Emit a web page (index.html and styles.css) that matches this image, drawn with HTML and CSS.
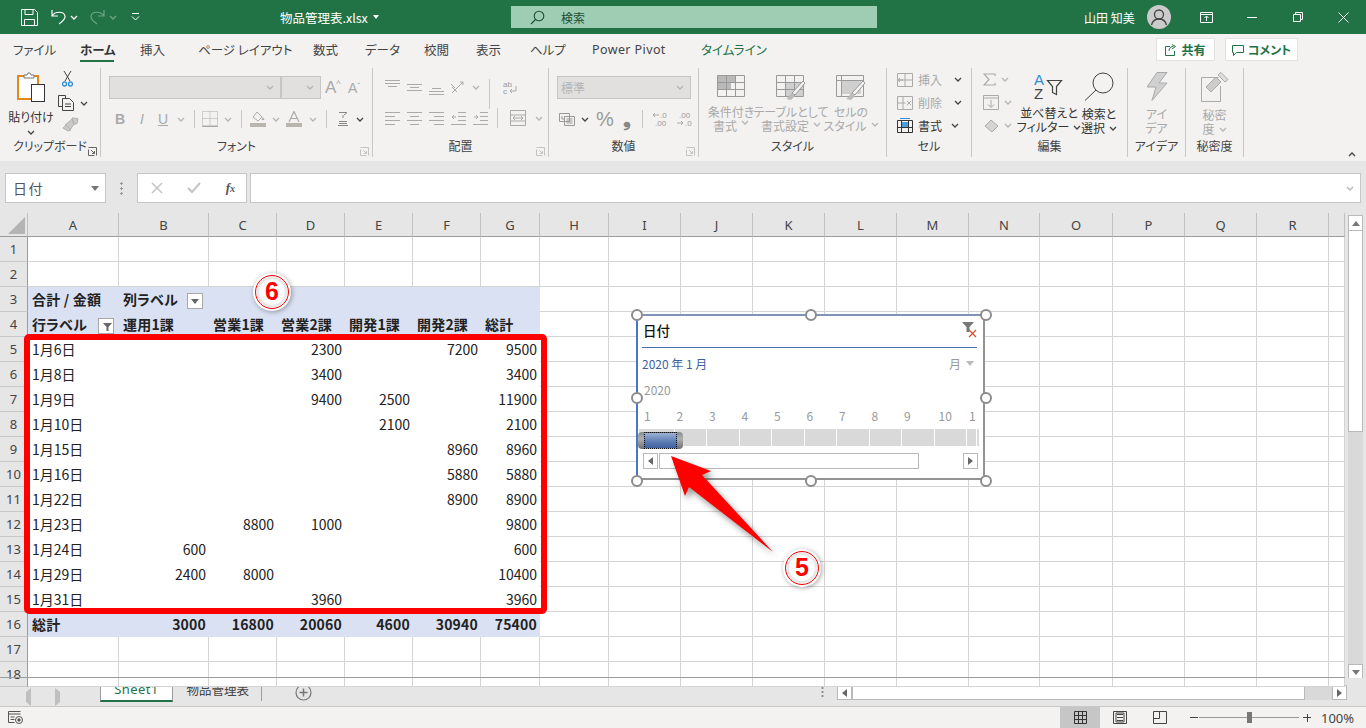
FILE: index.html
```html
<!DOCTYPE html>
<html lang="ja">

<head>
    <meta charset="UTF-8">
    <title>物品管理表.xlsx - Excel</title>
    <link rel="stylesheet" href="styles.css">
</head>

<body>
    <svg class="sprite">
        <symbol id="chev" viewBox="0 0 8 5"><path d="M1 1l3 3 3-3" fill="none" stroke="currentColor" stroke-width="1.3"/></symbol>
        <symbol id="launch" viewBox="0 0 9 9"><path d="M.5.5h8v8M.5 2.5v6h6M3 3l3.500 3.500M6.500 4v2.500H4" fill="none" stroke="currentColor"/></symbol>
    </svg>

    <header class="titlebar">
        <svg class="qat-save" width="17" height="17" viewBox="0 0 17 17" fill="none" stroke="#fff"><path d="M.5.500h13l3 3v13H.500zM4 .5v5h8v-5M3.500 16.500v-6h10v6"/></svg>
        <svg class="qat-undo" width="15" height="16" viewBox="0 0 15 16" fill="none" stroke="#fff" stroke-width="1.200"><path d="M1 1v6h6M1 7c3-5 12-5 13 0 .5 3-3 6-6 8"/></svg>
        <svg class="chev qat-chev white"><use href="#chev"/></svg>
        <svg class="qat-redo" width="15" height="16" viewBox="0 0 15 16" fill="none" stroke="#6fa588" stroke-width="1.200"><path d="M14 1v6H8M14 7c-3-5-12-5-13 0-.5 3 3 6 6 8"/></svg>
        <svg class="chev qat-chev2"><use href="#chev"/></svg>
        <svg class="qat-more" width="9" height="8" viewBox="0 0 9 8" fill="none" stroke="#fff"><path d="M1 .5h7M1 3.500l3.500 3.500L8 3.500"/></svg>
        <span class="doc-name">物品管理表.xlsx</span>
        <span class="doc-caret"></span>
        <div class="searchbox">
            <svg width="15" height="15" viewBox="0 0 15 15" fill="none" stroke="#1c4f35" stroke-width="1.100"><circle cx="9" cy="6" r="4.800"/><path d="M5.500 9.500L1 14"/></svg>
            <span>検索</span>
        </div>
        <span class="user-name">山田 知美</span>
        <span class="avatar">
            <svg width="24" height="24" viewBox="0 0 24 24" fill="none" stroke="#444" stroke-width="1.300"><circle cx="12" cy="9.500" r="4.500"/><path d="M4.500 20c1-4 4-6 7.500-6s6.500 2 7.500 6"/></svg>
        </span>
        <svg class="win-ribbon" width="13" height="11" viewBox="0 0 13 11" fill="none" stroke="#fff"><path d="M.5.500h12v10H.500zM.5 2.500h12M6.500 9V4.500M4.500 6l2-2 2 2"/></svg>
        <svg class="win-min" width="10" height="1"><rect width="10" height="1" fill="#fff"/></svg>
        <svg class="win-max" width="10" height="10" viewBox="0 0 10 10" fill="none" stroke="#fff"><path d="M.5 2.500h7v7h-7zM2.500 2.500v-2h7v7h-2"/></svg>
        <svg class="win-close" width="11" height="11" viewBox="0 0 11 11" stroke="#fff"><path d="M.5.500l10 10M10.500.500l-10 10"/></svg>
    </header>

    <nav class="tabs">
        <a class="tab tab-file">ファイル</a>
        <a class="tab tab-home">ホーム</a>
        <a class="tab tab-insert">挿入</a>
        <a class="tab tab-layout">ページ レイアウト</a>
        <a class="tab tab-formula">数式</a>
        <a class="tab tab-data">データ</a>
        <a class="tab tab-review">校閲</a>
        <a class="tab tab-view">表示</a>
        <a class="tab tab-help">ヘルプ</a>
        <a class="tab tab-pp">Power Pivot</a>
        <a class="tab tab-timeline">タイムライン</a>
        <a class="action action-share">
            <svg width="12" height="12" viewBox="0 0 12 12" fill="none" stroke="#217346"><path d="M5 2.500H.5v9h9V7M4 7c0-3 2-4.500 4.500-4.500M7 .5l3.500 2L7 5"/></svg>
            共有
        </a>
        <a class="action action-comment">
            <svg width="12" height="12" viewBox="0 0 12 12" fill="none" stroke="#217346"><path d="M.5 1.500h11v7h-7l-3 3v-3h-1z"/></svg>
            コメント
        </a>
    </nav>

    <section class="ribbon">
        <div class="group g-clip">
            <div class="clip-body">
                <div class="bigtool paste">
                    <svg width="30" height="32" viewBox="0 0 30 32">
                        <rect x="2" y="5" width="20" height="23" fill="#fff" stroke="#e08a1e" stroke-width="2"/>
                        <path d="M8 7V4h3l1-2h2l1 2h3v3z" fill="#fff" stroke="#777"/>
                        <rect x="15.500" y="13.500" width="13" height="17" fill="#fff" stroke="#333"/>
                    </svg>
                    <span>貼り付け</span>
                    <svg class="chev dark"><use href="#chev"/></svg>
                </div>
                <div class="clip-small">
                    <svg width="11" height="16" viewBox="0 0 11 16" fill="none"><path d="M2 0l6 10M9 0L3 10" stroke="#444"/><circle cx="2.500" cy="13" r="2" stroke="#2e8fd8" stroke-width="1.300"/><circle cx="8.500" cy="13" r="2" stroke="#2e8fd8" stroke-width="1.300"/></svg>
                    <div class="clip-copy">
                        <svg width="17" height="16" viewBox="0 0 17 16" fill="#f3f2f1" stroke="#444"><path d="M.5.500h7v11h-7z"/><path d="M4.500 3.500h7l4 4v8h-11zM7 9h6M7 11.500h6"/></svg>
                        <svg class="chev dark"><use href="#chev"/></svg>
                    </div>
                    <svg width="17" height="15" viewBox="0 0 17 15" fill="#c9c9c9" stroke="#b2b2b2"><path d="M10 1l6 .5-1 5-3 1zM10 2L3 8l5 5 4-6z"/><path d="M1 11l3-3 5 5-3 1z"/></svg>
                </div>
            </div>
            <div class="group-label">クリップボード</div>
            <svg class="launcher dark"><use href="#launch"/></svg>
        </div>

        <div class="group g-font">
            <div class="combo-row">
                <div class="combo combo-font"><svg class="chev"><use href="#chev"/></svg></div>
                <div class="combo combo-size"><svg class="chev"><use href="#chev"/></svg></div>
                <span class="grow-a">A<small>^</small></span>
                <span class="shrink-a">A<small>ˇ</small></span>
            </div>
            <div class="tool-row">
                <span class="t w22 fmt"><b>B</b></span>
                <span class="t w22 fmt"><i>I</i></span>
                <span class="t w20 fmt underline">U</span>
                <span class="t w16"><svg class="chev"><use href="#chev"/></svg></span>
                <span class="vsep"></span>
                <span class="t w20"><svg width="16" height="16" viewBox="0 0 16 16" fill="none" stroke="#aaa" stroke-dasharray="1 1"><path d="M.5.500h15v14H.500zM8 .5v14M.5 7.500h15"/><path d="M0 15.500h16" stroke-dasharray="none"/></svg></span>
                <span class="t w16"><svg class="chev"><use href="#chev"/></svg></span>
                <span class="vsep"></span>
                <span class="t w22"><svg width="16" height="16" viewBox="0 0 16 16"><path d="M7 1l5 5-4 4-5-4z" fill="none" stroke="#aaa"/><path d="M13 6l1.500 3h-3z" fill="#aaa"/><rect y="12" width="16" height="4" fill="#b8b4ae"/></svg></span>
                <span class="t w14"><svg class="chev"><use href="#chev"/></svg></span>
                <span class="t w22"><svg width="16" height="16" viewBox="0 0 16 16"><path d="M3 11L8 .5 13 11M5 7.500h6" fill="none" stroke="#aaa" stroke-width="1.200"/><rect y="12" width="16" height="4" fill="#b8b4ae"/></svg></span>
                <span class="t w16"><svg class="chev"><use href="#chev"/></svg></span>
                <span class="vsep"></span>
                <span class="t w22"><svg width="12" height="16" viewBox="0 0 12 16" fill="none" stroke="#888"><path d="M2 1.500h8L7 4M6 4v3M2 10.500h8M2 12.500h8M1 14.500h10"/></svg></span>
                <span class="t w12"><svg class="chev dark"><use href="#chev"/></svg></span>
            </div>
            <div class="group-label">フォント</div>
            <svg class="launcher"><use href="#launch"/></svg>
        </div>

        <div class="group g-align">
            <div class="tool-row row-top">
                <span class="t w22"><svg width="15" height="15" viewBox="0 0 15 15" stroke="#aaa"><path d="M0 .5h15M0 3.500h15M3 6.500h9"/></svg></span>
                <span class="t w22"><svg width="15" height="15" viewBox="0 0 15 15" stroke="#aaa"><path d="M0 4.500h15M3 7.500h9M0 10.500h15"/></svg></span>
                <span class="t w22"><svg width="15" height="15" viewBox="0 0 15 15" stroke="#aaa"><path d="M3 8.500h9M0 11.500h15M0 14.500h15"/></svg></span>
                <span class="t w22"><svg width="16" height="15" viewBox="0 0 16 15" fill="none" stroke="#aaa"><path d="M2 13L13 2M10 2h3v3M2 7l5 5M1 4l4 4"/></svg></span>
                <span class="t w14"><svg class="chev"><use href="#chev"/></svg></span>
                <span class="vsep tall"></span>
                <span class="t w30"><svg width="15" height="15" viewBox="0 0 15 15"><text x="0" y="7" class="svg-txt">ab</text><text x="0" y="14" class="svg-txt">c</text><path d="M13 6v5H7M9 9l-2 2 2 2" fill="none" stroke="#aaa"/></svg></span>
            </div>
            <div class="tool-row row-bot">
                <span class="t w22"><svg width="15" height="13" viewBox="0 0 15 13" stroke="#aaa"><path d="M0 .5h15M0 4.500h10M0 8.500h15M0 12.500h10"/></svg></span>
                <span class="t w22"><svg width="15" height="13" viewBox="0 0 15 13" stroke="#aaa"><path d="M0 .5h15M3 4.500h9M0 8.500h15M3 12.500h9"/></svg></span>
                <span class="t w22"><svg width="15" height="13" viewBox="0 0 15 13" stroke="#aaa"><path d="M0 .5h15M5 4.500h10M0 8.500h15M5 12.500h10"/></svg></span>
                <span class="t w22"><svg width="15" height="13" viewBox="0 0 15 13" fill="none" stroke="#aaa"><path d="M7 .5h8M7 4.500h8M7 8.500h8M0 12.500h15M5 5H1M3 3L1 5l2 2"/></svg></span>
                <span class="t w22"><svg width="15" height="13" viewBox="0 0 15 13" fill="none" stroke="#aaa"><path d="M7 .5h8M7 4.500h8M7 8.500h8M0 12.500h15M1 5h4M3 3l2 2-2 2"/></svg></span>
                <span class="vsep gap6"></span>
                <span class="t w30"><svg width="16" height="16" viewBox="0 0 16 16" fill="none" stroke="#aaa"><path d="M.5.500h15v15H.500zM.5 5h15M.5 11h15M3 8h10M5 6L3 8l2 2M11 6l2 2-2 2"/></svg></span>
                <span class="t w10"><svg class="chev"><use href="#chev"/></svg></span>
            </div>
            <div class="group-label">配置</div>
            <svg class="launcher"><use href="#launch"/></svg>
        </div>

        <div class="group g-number">
            <div class="combo-row">
                <div class="combo combo-num"><span>標準</span><svg class="chev"><use href="#chev"/></svg></div>
            </div>
            <div class="tool-row">
                <span class="t w20"><svg width="16" height="14" viewBox="0 0 16 14" fill="none" stroke="#999"><path d="M.5 1.500h10v8H.500zM5.500 4.500h10v9h-10zM7.500 7h6M7.500 9h6M7.500 11h6M3 4v3h2"/></svg></span>
                <span class="t w16"><svg class="chev dark"><use href="#chev"/></svg></span>
                <span class="t w24 pct">%</span>
                <span class="t w20 comma">❟</span>
                <span class="vsep"></span>
                <span class="t w24"><svg width="16" height="16" viewBox="0 0 16 16"><text x="8" y="7" class="svg-txt">.0</text><text x="3" y="15" class="svg-txt">.00</text><path d="M7 4H1M3 2L1 4l2 2" fill="none" stroke="#aaa"/></svg></span>
                <span class="t w24"><svg width="16" height="16" viewBox="0 0 16 16"><text x="3" y="7" class="svg-txt">.00</text><text x="9" y="15" class="svg-txt">.0</text><path d="M1 12h6M5 10l2 2-2 2" fill="none" stroke="#aaa"/></svg></span>
            </div>
            <div class="group-label">数値</div>
            <svg class="launcher"><use href="#launch"/></svg>
        </div>

        <div class="group g-style">
            <div class="style-body">
                <div class="bigtool">
                    <svg width="28" height="22" viewBox="0 0 28 22"><path d="M1 1h17v7H1zM1 8h13v7H1z" fill="#b9b9b9"/><path d="M.5.500h27v21H.500zM.5 7.500h27M.5 14.500h27M9.500.5v21M18.500.5v21" fill="none" stroke="#999"/></svg>
                    <span>条件付き</span>
                    <span>書式<svg class="chev"><use href="#chev"/></svg></span>
                </div>
                <div class="bigtool">
                    <svg width="30" height="26" viewBox="0 0 30 26"><path d="M10 7h18v14H10z" fill="#cfcfcf"/><path d="M.5.500h27v21H.500zM.5 7.500h27M.5 14.500h27M9.500.5v21M18.500.5v21" fill="none" stroke="#999"/><path d="M29 8L19 20l-3-2L27 6z" fill="#f3f2f1" stroke="#999"/><path d="M15 18l4 3-4 4-5-1c2-1 3-3 5-6z" fill="#bbb"/></svg>
                    <span>テーブルとして</span>
                    <span>書式設定<svg class="chev"><use href="#chev"/></svg></span>
                </div>
                <div class="bigtool">
                    <svg width="30" height="26" viewBox="0 0 30 26"><path d="M5 6h20v13H5z" fill="#cfcfcf"/><path d="M.5.500h27v21H.500zM.5 5.500h27M5.500.5v21" fill="none" stroke="#999"/><path d="M29 8L19 20l-3-2L27 6z" fill="#f3f2f1" stroke="#999"/><path d="M15 18l4 3-4 4-5-1c2-1 3-3 5-6z" fill="#bbb"/></svg>
                    <span>セルの</span>
                    <span>スタイル<svg class="chev"><use href="#chev"/></svg></span>
                </div>
            </div>
            <div class="group-label">スタイル</div>
        </div>

        <div class="group g-cells">
            <div class="cell-row dis">
                <svg width="16" height="14" viewBox="0 0 16 14" fill="none" stroke="#aaa"><path d="M.5.500h15v13H.500zM8 .5v13M.5 7h15M6 7H1M3 5L1 7l2 2"/></svg>
                <span>挿入</span><svg class="chev dark"><use href="#chev"/></svg>
            </div>
            <div class="cell-row dis">
                <svg width="16" height="14" viewBox="0 0 16 14" fill="none" stroke="#aaa"><path d="M.5.500h15v13H.500zM.5 7h8M6 .5v13M10 5l4 4M14 5l-4 4"/></svg>
                <span>削除</span><svg class="chev dark"><use href="#chev"/></svg>
            </div>
            <div class="cell-row">
                <svg width="16" height="15" viewBox="0 0 16 15"><path d="M4 4h8v5H4z" fill="#4a9ede"/><path d="M.5 2.500h15v12H.500zM.5 9.500h15M4.500 2.500v12M11.500 2.500v12" fill="none" stroke="#333"/><path d="M3 .5h10" stroke="#2e8fd8"/></svg>
                <span>書式</span><svg class="chev dark near"><use href="#chev"/></svg>
            </div>
            <div class="group-label">セル</div>
        </div>

        <div class="group g-edit">
            <div class="edit-body">
                <div class="edit-small">
                    <div class="edit-line"><svg width="13" height="13" viewBox="0 0 13 13" fill="none" stroke="#aaa" stroke-width="1.200"><path d="M12 3V1H1l5 5.500L1 12h11v-2"/></svg><svg class="chev"><use href="#chev"/></svg></div>
                    <div class="edit-line"><svg width="16" height="15" viewBox="0 0 16 15" fill="none" stroke="#aaa"><path d="M.5.500h15v14H.500zM.5 3h15M8 5v7M5 9.500l3 3 3-3"/></svg><svg class="chev"><use href="#chev"/></svg></div>
                    <div class="edit-line"><svg width="16" height="14" viewBox="0 0 16 14" stroke="#aaa" fill="#d4d4d4"><path d="M8 1l7 6-6 6-7-6z"/></svg><svg class="chev"><use href="#chev"/></svg></div>
                </div>
                <div class="bigtool active sort">
                    <svg width="30" height="28" viewBox="0 0 30 28">
                        <text x="0" y="13" class="az-a">A</text>
                        <text x="0" y="27" class="az-z">Z</text>
                        <path d="M13.500 8.500h14l-5 6v8l-4-2v-6z" fill="none" stroke="#444" stroke-width="1.200"/>
                    </svg>
                    <span>並べ替えと</span>
                    <span>フィルター<svg class="chev dark"><use href="#chev"/></svg></span>
                </div>
                <div class="bigtool active find">
                    <svg width="30" height="29" viewBox="0 0 30 29" fill="none" stroke="#444"><circle cx="19" cy="11" r="10"/><path d="M12 18L1 28.500"/></svg>
                    <span>検索と</span>
                    <span>選択<svg class="chev dark"><use href="#chev"/></svg></span>
                </div>
            </div>
            <div class="group-label">編集</div>
        </div>

        <div class="group g-idea">
            <div class="bigtool solo">
                <svg width="22" height="29" viewBox="0 0 22 29"><path d="M11 .5h10L13 11h8L6 28.500 10 15H1z" fill="#d0d0d0" stroke="#aaa"/></svg>
                <span>アイ</span>
                <span>デア</span>
            </div>
            <div class="group-label">アイデア</div>
        </div>

        <div class="group g-sens">
            <div class="bigtool solo">
                <svg width="28" height="30" viewBox="0 0 28 30" fill="none" stroke="#aaa"><path d="M.5 5.500h17M.5 5.500v24h19V14"/><path d="M5 15L15 5l5 5-10 10z" fill="#ccc"/><path d="M17 3l3-2.500 7 7L24 10z" fill="#ddd"/></svg>
                <span>秘密</span>
                <span>度<svg class="chev"><use href="#chev"/></svg></span>
            </div>
            <div class="group-label">秘密度</div>
        </div>

        <svg class="chev collapse dark"><use href="#chev"/></svg>
    </section>

    <section class="formula">
        <div class="namebox">
            <span>日付</span>
            <span class="caret"></span>
        </div>
        <div class="fdots"></div>
        <div class="fbuttons">
            <svg width="12" height="12" viewBox="0 0 12 12" stroke="#c4c4c4" stroke-width="1.500"><path d="M1 1l10 10M11 1L1 11"/></svg>
            <svg width="14" height="12" viewBox="0 0 14 12" fill="none" stroke="#c4c4c4" stroke-width="2"><path d="M1 6l4 4 8-9"/></svg>
            <i class="fx">f<small>x</small></i>
        </div>
        <div class="finput"><svg class="chev"><use href="#chev"/></svg></div>
    </section>

    <main class="sheet">
        <div class="grid-wrap">
            <table class="grid">
                <colgroup>
                    <col class="c-rh"><col class="c-a"><col class="c-b"><col class="c-c"><col class="c-c"><col class="c-c"><col class="c-c"><col class="c-g"><col class="c-h"><col class="c-i"><col class="c-i"><col class="c-i"><col class="c-i"><col class="c-i"><col class="c-n"><col class="c-o"><col class="c-i"><col class="c-i"><col class="c-i"><col class="c-s">
                </colgroup>
                <thead>
                    <tr>
                        <th class="corner"><svg width="17" height="17" viewBox="0 0 17 17"><path d="M17 0v17H0z" fill="#b4b4b4"/></svg></th>
                        <th>A</th><th>B</th><th>C</th><th>D</th><th>E</th><th>F</th><th>G</th><th>H</th><th>I</th><th>J</th><th>K</th><th>L</th><th>M</th><th>N</th><th>O</th><th>P</th><th>Q</th><th>R</th><th></th>
                    </tr>
                </thead>
                <tbody>
                    <tr><th>1</th><td></td><td></td><td></td><td></td><td></td><td></td><td></td><td></td><td></td><td></td><td></td><td></td><td></td><td></td><td></td><td></td><td></td><td></td><td></td></tr>
                    <tr><th>2</th><td></td><td></td><td></td><td></td><td></td><td></td><td></td><td></td><td></td><td></td><td></td><td></td><td></td><td></td><td></td><td></td><td></td><td></td><td></td></tr>
                    <tr class="pv-head"><th>3</th><td class="pv">合計 / 金額</td><td class="pv" colspan="2"><span class="has-filter gap9">列ラベル<span class="fbtn"><span class="caret"></span></span></span></td><td class="pv"></td><td class="pv"></td><td class="pv"></td><td class="pv"></td><td></td><td></td><td></td><td></td><td></td><td></td><td></td><td></td><td></td><td></td><td></td><td></td></tr>
                    <tr class="pv-head"><th>4</th><td class="pv"><span class="has-filter gap12">行ラベル<span class="fbtn on"><svg width="9" height="8" viewBox="0 0 9 8"><path d="M0 0h9L5.500 4v4h-2V4z" fill="#666"/></svg></span></span></td><td class="pv">運用1課</td><td class="pv">営業1課</td><td class="pv">営業2課</td><td class="pv">開発1課</td><td class="pv">開発2課</td><td class="pv">総計</td><td></td><td></td><td></td><td></td><td></td><td></td><td></td><td></td><td></td><td></td><td></td><td></td></tr>
                    <tr><th>5</th><td class="pb">1月6日</td><td class="pb n"></td><td class="pb n"></td><td class="pb n">2300</td><td class="pb n"></td><td class="pb n">7200</td><td class="pb n">9500</td><td></td><td></td><td></td><td></td><td></td><td></td><td></td><td></td><td></td><td></td><td></td><td></td></tr>
                    <tr><th>6</th><td class="pb">1月8日</td><td class="pb n"></td><td class="pb n"></td><td class="pb n">3400</td><td class="pb n"></td><td class="pb n"></td><td class="pb n">3400</td><td></td><td></td><td></td><td></td><td></td><td></td><td></td><td></td><td></td><td></td><td></td><td></td></tr>
                    <tr><th>7</th><td class="pb">1月9日</td><td class="pb n"></td><td class="pb n"></td><td class="pb n">9400</td><td class="pb n">2500</td><td class="pb n"></td><td class="pb n">11900</td><td></td><td></td><td></td><td></td><td></td><td></td><td></td><td></td><td></td><td></td><td></td><td></td></tr>
                    <tr><th>8</th><td class="pb">1月10日</td><td class="pb n"></td><td class="pb n"></td><td class="pb n"></td><td class="pb n">2100</td><td class="pb n"></td><td class="pb n">2100</td><td></td><td></td><td></td><td></td><td></td><td></td><td></td><td></td><td></td><td></td><td></td><td></td></tr>
                    <tr><th>9</th><td class="pb">1月15日</td><td class="pb n"></td><td class="pb n"></td><td class="pb n"></td><td class="pb n"></td><td class="pb n">8960</td><td class="pb n">8960</td><td></td><td></td><td></td><td></td><td></td><td></td><td></td><td></td><td></td><td></td><td></td><td></td></tr>
                    <tr><th>10</th><td class="pb">1月16日</td><td class="pb n"></td><td class="pb n"></td><td class="pb n"></td><td class="pb n"></td><td class="pb n">5880</td><td class="pb n">5880</td><td></td><td></td><td></td><td></td><td></td><td></td><td></td><td></td><td></td><td></td><td></td><td></td></tr>
                    <tr><th>11</th><td class="pb">1月22日</td><td class="pb n"></td><td class="pb n"></td><td class="pb n"></td><td class="pb n"></td><td class="pb n">8900</td><td class="pb n">8900</td><td></td><td></td><td></td><td></td><td></td><td></td><td></td><td></td><td></td><td></td><td></td><td></td></tr>
                    <tr><th>12</th><td class="pb">1月23日</td><td class="pb n"></td><td class="pb n">8800</td><td class="pb n">1000</td><td class="pb n"></td><td class="pb n"></td><td class="pb n">9800</td><td></td><td></td><td></td><td></td><td></td><td></td><td></td><td></td><td></td><td></td><td></td><td></td></tr>
                    <tr><th>13</th><td class="pb">1月24日</td><td class="pb n">600</td><td class="pb n"></td><td class="pb n"></td><td class="pb n"></td><td class="pb n"></td><td class="pb n">600</td><td></td><td></td><td></td><td></td><td></td><td></td><td></td><td></td><td></td><td></td><td></td><td></td></tr>
                    <tr><th>14</th><td class="pb">1月29日</td><td class="pb n">2400</td><td class="pb n">8000</td><td class="pb n"></td><td class="pb n"></td><td class="pb n"></td><td class="pb n">10400</td><td></td><td></td><td></td><td></td><td></td><td></td><td></td><td></td><td></td><td></td><td></td><td></td></tr>
                    <tr><th>15</th><td class="pb">1月31日</td><td class="pb n"></td><td class="pb n"></td><td class="pb n">3960</td><td class="pb n"></td><td class="pb n"></td><td class="pb n">3960</td><td></td><td></td><td></td><td></td><td></td><td></td><td></td><td></td><td></td><td></td><td></td><td></td></tr>
                    <tr class="pv-head"><th>16</th><td class="pv">総計</td><td class="pv n">3000</td><td class="pv n">16800</td><td class="pv n">20060</td><td class="pv n">4600</td><td class="pv n">30940</td><td class="pv n">75400</td><td></td><td></td><td></td><td></td><td></td><td></td><td></td><td></td><td></td><td></td><td></td><td></td></tr>
                    <tr><th>17</th><td></td><td></td><td></td><td></td><td></td><td></td><td></td><td></td><td></td><td></td><td></td><td></td><td></td><td></td><td></td><td></td><td></td><td></td><td></td></tr>
                    <tr><th>18</th><td></td><td></td><td></td><td></td><td></td><td></td><td></td><td></td><td></td><td></td><td></td><td></td><td></td><td></td><td></td><td></td><td></td><td></td><td></td></tr>
                </tbody>
            </table>

            <div class="slicer">
                <div class="sl-head">
                    <span>日付</span>
                    <svg width="16" height="16" viewBox="0 0 16 16"><path d="M1 0h12L8.500 5v5h-3V5z" fill="#777"/><path d="M8 8l7 7M15 8l-7 7" stroke="#d9542b" stroke-width="1.300"/></svg>
                </div>
                <div class="sl-range">
                    <span>2020 年 1 月</span>
                    <span class="sl-level">月<span class="caret"></span></span>
                </div>
                <div class="sl-year">2020</div>
                <div class="sl-months"><span>1</span><span>2</span><span>3</span><span>4</span><span>5</span><span>6</span><span>7</span><span>8</span><span>9</span><span>10</span><span>1</span></div>
                <div class="sl-bar"><i></i><i></i><i></i><i></i><i></i><i></i><i></i><i></i><i></i><i></i><i></i></div>
                <div class="sl-thumb"><span></span></div>
                <div class="sl-scroll">
                    <span class="sb-btn"><span class="tri-l"></span></span>
                    <span class="sl-track"></span>
                    <span class="sb-btn"><span class="tri-r"></span></span>
                </div>
                <span class="hdl h1"></span><span class="hdl h2"></span><span class="hdl h3"></span><span class="hdl h4"></span>
                <span class="hdl h5"></span><span class="hdl h6"></span><span class="hdl h7"></span><span class="hdl h8"></span>
            </div>

            <div class="red-frame"></div>
            <svg class="arrow" width="130" height="120" viewBox="0 0 130 120"><path d="M10 3L50 18 41 22 112 99 28 34 24 43z" fill="#ff0000"/></svg>
            <div class="badge b6"><span>6</span></div>
            <div class="badge b5"><span>5</span></div>
        </div>
        <aside class="vscroll">
            <span class="sb-btn"><span class="tri-u"></span></span>
            <span class="v-thumb"></span>
            <span class="v-track"></span>
            <span class="sb-btn"><span class="tri-d"></span></span>
        </aside>
    </main>

    <section class="sheetbar">
        <div class="sheet-nav"><span class="tri-l pale"></span><span class="tri-r pale"></span></div>
        <a class="sheet-tab current">Sheet1</a>
        <a class="sheet-tab">物品管理表</a>
        <span class="tab-sep"></span>
        <svg class="add-sheet" width="17" height="17" viewBox="0 0 17 17" fill="none" stroke="#777"><circle cx="8.500" cy="8.500" r="7.500" stroke-width="1.200"/><path d="M8.500 4.500v8M4.500 8.500h8" stroke-width="1.500"/></svg>
        <span class="hdots"></span>
        <div class="hscroll">
            <span class="sb-btn"><span class="tri-l"></span></span>
            <span class="h-thumb"></span>
            <span class="h-track"></span>
            <span class="sb-btn"><span class="tri-r"></span></span>
        </div>
    </section>

    <footer class="status">
        <svg class="macro" width="15" height="13" viewBox="0 0 15 13" fill="none" stroke="#555"><path d="M.5.500h12M.5 3h12M.5.500v11h6M2.500 6h4M2.500 8.500h4"/><circle cx="11" cy="9" r="3.500"/><circle cx="11" cy="9" r="1.200" fill="#555"/></svg>
        <div class="view-btns">
            <span class="view on"><svg width="13" height="13" viewBox="0 0 13 13" fill="none" stroke="#333"><path d="M.5.500h12v12H.500zM4.500.5v12M8.500.5v12M.5 4.500h12M.5 8.500h12"/></svg></span>
            <span class="view"><svg width="14" height="13" viewBox="0 0 14 13" fill="none" stroke="#444"><path d="M.5.500h13v12H.500zM4 3.500h6M4 6.500h6M4 9.500h6M3 2v9h8V2z"/></svg></span>
            <span class="view"><svg width="14" height="13" viewBox="0 0 14 13" fill="none" stroke="#444"><path d="M.5.500h13v12H.500zM.5 7.500h6V.5"/></svg></span>
        </div>
        <span class="zoom-minus"></span>
        <span class="zoom-slider"><span></span></span>
        <span class="zoom-plus"></span>
        <span class="zoom-pct">100%</span>
    </footer>
</body>

</html>
```

FILE: styles.css
```css
:root {
    --green: #217346;
    --band: #e6e6e6;
    --ribbon: #f3f2f1;
    --dis: #a9a9a9;
    --line: #d4d4d4;
    --edge: #9b9b9b;
    --red: #ff0000;
    --jp: "Noto Sans CJK JP", "Noto Sans", sans-serif;
}

* {
    box-sizing: border-box;
}

body {
    margin: 0;
    width: 1366px;
    height: 728px;
    overflow: hidden;
    display: flex;
    flex-direction: column;
    font-family: var(--jp);
    font-feature-settings: "palt";
    font-size: 12px;
    color: #444;
    background: var(--ribbon);
}

.sprite {
    display: none;
}

svg {
    display: block;
    flex: none;
}

.chev {
    width: 8px;
    height: 5px;
    color: #b4b4b4;
}

.chev.dark {
    color: #444;
}

.chev.white {
    color: #fff;
}

/* title bar */
.titlebar {
    height: 34px;
    flex: none;
    background: var(--green);
    color: #fff;
    display: flex;
    align-items: center;
}

.qat-save { margin-left: 21px; }
.qat-undo { margin-left: 13px; }
.qat-chev { margin-left: 4px; }
.qat-redo { margin-left: 12px; }
.qat-chev2 { margin-left: 4px; color: #6fa588; }
.qat-more { margin-left: 14px; }

.doc-name {
    margin-left: 140px;
    width: 88px;
    font-size: 12.5px;
    white-space: nowrap;
}

.doc-caret {
    margin-left: 5px;
    border: 3.500px solid transparent;
    border-top: 4px solid #fff;
    border-bottom: 0;
}

.searchbox {
    margin-left: 132px;
    width: 366px;
    height: 22px;
    background: #9fcdb3;
    color: #1c4f35;
    display: flex;
    align-items: center;
    padding-left: 19px;
    gap: 16px;
}

.user-name {
    margin-left: 207px;
    width: 53px;
    white-space: nowrap;
}

.avatar {
    margin-left: 10px;
    width: 24px;
    height: 24px;
    border-radius: 50%;
    background: #cbcbcb;
}

.win-ribbon { margin-left: 29px; }
.win-min { margin-left: 34px; }
.win-max { margin-left: 36px; }
.win-close { margin-left: 35px; }

/* tabs */
.tabs {
    height: 32px;
    flex: none;
    display: flex;
    align-items: flex-start;
    padding-top: 6px;
    position: relative;
}

.tab {
    height: 22px;
    line-height: 19px;
    font-size: 12.500px;
    white-space: nowrap;
}

.tab-file { margin-left: 13px; width: 67px; }
.tab-home { width: 34px; font-weight: 700; color: #333; border-bottom: 2px solid var(--green); }
.tab-insert { margin-left: 26px; width: 58px; }
.tab-layout { width: 115px; }
.tab-formula { width: 52px; }
.tab-data { width: 59px; }
.tab-review { width: 52px; }
.tab-view { margin-left: 0; width: 54px; }
.tab-help { width: 62px; }
.tab-pp { width: 109px; font-family: "Noto Sans", sans-serif; font-size: 12.500px; letter-spacing: .4px; }
.tab-timeline { width: 60px; color: var(--green); }

.action {
    height: 23px;
    background: #fff;
    border: 1px solid #e2e2e2;
    color: var(--green);
    font-weight: 700;
    display: flex;
    align-items: center;
    justify-content: center;
    gap: 4px;
    margin-top: -2px;
}

.action-share { margin-left: 395px; width: 59px; }
.action-comment { margin-left: 10px; width: 73px; }

/* ribbon */
.ribbon {
    height: 95px;
    flex: none;
    display: flex;
    align-items: flex-start;
    padding-top: 2px;
    position: relative;
    font-size: 12px;
}

.group {
    height: 89px;
    flex: none;
    position: relative;
    border-right: 1px solid #c8c8c8;
}

.g-clip { width: 101px; }
.g-font { width: 272px; padding-left: 8px; }
.g-align { width: 176px; padding-left: 8px; }
.g-number { width: 150px; padding-left: 8px; }
.g-style { width: 188px; padding-left: 2px; }
.g-cells { width: 85px; padding-left: 10px; }
.g-edit { width: 156px; }
.g-idea { width: 58px; }
.g-sens { width: 58px; }

.group-label {
    position: absolute;
    left: 0;
    right: 0;
    bottom: 0;
    height: 20px;
    line-height: 18px;
    text-align: center;
    color: #444;
    font-size: 12px;
    white-space: nowrap;
}

.launcher {
    position: absolute;
    right: 3px;
    bottom: 1px;
    width: 9px;
    height: 9px;
    color: #c4c4c4;
}

.launcher.dark {
    color: #666;
}

.bigtool {
    display: flex;
    flex-direction: column;
    align-items: center;
    white-space: nowrap;
    line-height: 14px;
    color: var(--dis);
}

.bigtool > span {
    display: flex;
    align-items: center;
    gap: 4px;
}

.bigtool.active {
    color: #333;
}

.clip-body {
    display: flex;
    padding-top: 3px;
}

.paste {
    width: 62px;
    color: #333;
}

.paste svg:first-child {
    margin-bottom: 7px;
}

.paste .chev {
    margin-top: 6px;
}

.clip-small {
    display: flex;
    flex-direction: column;
    padding-top: 0;
}

.clip-small > svg:first-child { margin-left: 0; }
.clip-small > svg:last-child { margin-left: 0; margin-top: 6px; }

.clip-copy {
    display: flex;
    align-items: center;
    gap: 5px;
    margin: 8px 0 0 -4px;
}

.combo-row {
    display: flex;
    align-items: center;
    padding-top: 8px;
    height: 31px;
}

.combo {
    height: 23px;
    background: #e1e0df;
    border: 1px solid #c6c6c6;
    display: flex;
    align-items: center;
    justify-content: flex-end;
    padding-right: 6px;
}

.combo-font { width: 172px; }
.combo-size { width: 40px; }

.combo-num {
    width: 134px;
    justify-content: space-between;
    padding-left: 3px;
    color: #b4b4b4;
}

.grow-a, .shrink-a {
    color: var(--dis);
    display: flex;
    align-items: flex-start;
    font-family: "Liberation Sans", sans-serif;
}

.grow-a { font-size: 17px; margin-left: 4px; width: 22px; }
.shrink-a { font-size: 14px; margin-left: 1px; }
.grow-a small, .shrink-a small { font-size: 9px; line-height: 12px; }

.tool-row {
    display: flex;
    align-items: center;
    height: 18px;
    margin-top: 11px;
}

.row-top { margin-top: 0; position: relative; top: 11px; height: 16px; }
.row-bot { margin-top: 26px; height: 16px; }

.t {
    display: flex;
    justify-content: center;
    align-items: center;
    flex: none;
}

.w10 { width: 10px; }
.w12 { width: 12px; }
.w14 { width: 14px; }
.w16 { width: 16px; }
.w20 { width: 20px; }
.w22 { width: 22px; }
.w24 { width: 24px; }
.w30 { width: 32px; }

.fmt {
    font-family: "Liberation Sans", sans-serif;
    font-size: 14px;
    color: var(--dis);
}

.underline {
    text-decoration: underline;
}

.vsep {
    width: 1px;
    height: 18px;
    background: #c8c8c8;
    margin: 0 5px;
    flex: none;
}

.vsep.tall {
    height: 30px;
    margin: 0 4px 0 6px;
    align-self: flex-start;
}

.vsep.gap6 {
    height: 20px;
    margin: 0 4px 0 6px;
}

.svg-txt {
    font: 8px "Liberation Sans", sans-serif;
    fill: #999;
}

.pct {
    font: 20px "Liberation Sans", sans-serif;
    color: #999;
}

.comma {
    font: 700 20px "DejaVu Sans", sans-serif;
    color: #888;
    height: 18px;
}

.style-body {
    display: flex;
    padding-top: 7px;
}

.style-body .bigtool {
    width: 60px;
}

.style-body svg:first-child {
    margin-bottom: 8px;
}

.style-body .bigtool:not(:first-child) svg:first-child {
    margin-bottom: 4px;
}

.cell-row {
    display: flex;
    align-items: center;
    height: 23px;
    width: 65px;
    gap: 5px;
    color: #333;
}

.cell-row.dis {
    color: var(--dis);
}

.cell-row .chev {
    margin-left: auto;
}

.cell-row .chev.near {
    margin-left: 4px;
}

.edit-body {
    display: flex;
}

.edit-small {
    width: 46px;
    padding-left: 11px;
    flex: none;
}

.edit-line {
    display: flex;
    align-items: center;
    height: 23px;
    gap: 5px;
}

.sort {
    width: 62px;
    padding-top: 4px;
    flex: none;
}

.find {
    width: 38px;
    padding-top: 4px;
    flex: none;
}

.sort > svg, .find > svg {
    margin-bottom: 6px;
}

.az-a {
    font: 15px "Liberation Sans", sans-serif;
    fill: #2e8fd8;
}

.az-z {
    font: 15px "Liberation Sans", sans-serif;
    fill: #444;
}

.solo {
    padding-top: 4px;
}

.solo > svg {
    margin-bottom: 6px;
}

.collapse {
    position: absolute;
    right: 10px;
    bottom: 4px;
    transform: rotate(180deg);
}

/* formula bar */
.formula {
    height: 52px;
    flex: none;
    background: var(--band);
    display: flex;
    padding: 12px 5px 10px;
}

.namebox, .fbuttons, .finput {
    height: 30px;
    background: #fff;
    border: 1px solid #c6c6c6;
    display: flex;
    align-items: center;
}

.namebox {
    width: 101px;
    padding: 0 6px 0 7px;
    justify-content: space-between;
    font-size: 14px;
    letter-spacing: 1.500px;
    color: #555;
}

.caret {
    display: inline-block;
    border: 4px solid transparent;
    border-top: 5px solid #777;
    border-bottom: 0;
}

.fdots {
    width: 31px;
    height: 14px;
    margin-top: 8px;
    background: radial-gradient(circle, #999 1px, transparent 1.200px) center top / 3px 5px repeat-y;
}

.fbuttons {
    width: 110px;
    padding: 0 11px 0 13px;
    justify-content: space-between;
}

.fx {
    font: italic 700 13px "Liberation Serif", serif;
    color: #555;
}

.fx small {
    font-size: 10px;
}

.finput {
    margin-left: 3px;
    width: 1111px;
    justify-content: flex-end;
    padding-right: 6px;
}

/* sheet */
.sheet {
    height: 465px;
    flex: none;
    display: flex;
    background: var(--band);
}

.grid-wrap {
    width: 1345px;
    height: 465px;
    flex: none;
    position: relative;
}

.grid-wrap::after {
    content: "";
    position: absolute;
    left: 0;
    right: 0;
    bottom: 0;
    height: 1px;
    background: var(--edge);
}

.grid {
    width: 1345px;
    table-layout: fixed;
    border-collapse: separate;
    border-spacing: 0;
    background: #fff;
    font-size: 14px;
    color: #222;
}

.c-rh { width: 28px; }
.c-a { width: 91px; }
.c-b { width: 90px; }
.c-c { width: 68px; }
.c-g { width: 59px; }
.c-h { width: 69px; }
.c-i { width: 72px; }
.c-n { width: 71px; }
.c-o { width: 73px; }
.c-s { width: 16px; }

.grid thead th {
    height: 24px;
    background: var(--band);
    font-family: "Noto Sans", sans-serif;
    font-weight: 400;
    font-size: 13px;
    color: #444;
    border-right: 1px solid #c0c0c0;
    border-bottom: 1px solid var(--edge);
    padding: 0;
}

.corner svg {
    margin: 1px 0 0 8px;
}

.grid tbody th {
    height: 25px;
    background: var(--band);
    font-family: "Noto Sans", sans-serif;
    font-weight: 400;
    font-size: 13px;
    color: #444;
    border-right: 1px solid var(--edge);
    border-bottom: 1px solid #c8c8c8;
    padding: 0;
}

.grid td {
    height: 25px;
    padding: 0 2px 0 4px;
    border-right: 1px solid var(--line);
    border-bottom: 1px solid var(--line);
    white-space: nowrap;
    overflow: hidden;
    line-height: 20px;
}

.grid .pb {
    border-color: #fff;
}

.grid .n {
    text-align: right;
}

.grid .pv {
    background: #d9e1f2;
    border-color: #d9e1f2;
    font-weight: 700;
    letter-spacing: .2px;
}

.has-filter {
    display: flex;
    align-items: center;
}

.gap9 .fbtn { margin-left: 9px; }
.gap12 .fbtn { margin-left: 11px; }

.fbtn {
    width: 16px;
    height: 16px;
    background: #fff;
    border: 1px solid #a8a8a8;
    display: flex;
    align-items: center;
    justify-content: center;
    margin-top: 3px;
}

.fbtn .caret {
    margin-top: 2px;
    border-top-color: #666;
}

.fbtn.on svg {
    margin: 2px 0 0 2px;
}

/* overlays on the grid */
.red-frame {
    position: absolute;
    left: 24px;
    top: 121px;
    width: 523px;
    height: 280px;
    border: 6.500px solid var(--red);
    border-radius: 5px;
}

.arrow {
    position: absolute;
    left: 661px;
    top: 240px;
    filter: drop-shadow(3px 4px 3px rgba(0, 0, 0, .4));
}

.badge {
    position: absolute;
    width: 38px;
    height: 38px;
    border-radius: 50%;
    background: #fff;
    box-shadow: 1px 1px 5px rgba(0, 0, 0, .35);
    display: flex;
    align-items: center;
    justify-content: center;
}

.badge span {
    width: 34px;
    height: 34px;
    border-radius: 50%;
    border: 1.500px solid var(--red);
    color: var(--red);
    font: 700 25px/31px "Liberation Sans", sans-serif;
    text-align: center;
    background: radial-gradient(circle, #fff 52%, #e3e3e3 62%, #fff 76%);
}

.b6 { left: 253px; top: 60px; }
.b5 { left: 783px; top: 336px; }

/* slicer */
.slicer {
    position: absolute;
    left: 636px;
    top: 101px;
    width: 349px;
    height: 166px;
    background: #fff;
    border: 2px solid #939393;
    border-left-color: #4a76c6;
    border-top-color: #7f93b8;
    padding: 0 6px 0 4px;
}

.sl-head {
    height: 32px;
    border-bottom: 1px solid #4a6eb0;
    display: flex;
    align-items: center;
    justify-content: space-between;
    padding: 0 0 4px 1px;
    font-size: 13.500px;
    font-weight: 500;
    color: #111;
}

.sl-range {
    height: 29px;
    display: flex;
    align-items: center;
    justify-content: space-between;
    padding-right: 3px;
    color: #3f5f9e;
    padding-top: 1px;
}

.sl-level {
    color: #999;
    display: flex;
    align-items: center;
    gap: 5px;
}

.sl-level .caret {
    border-top-color: #bbb;
    margin-top: 1px;
}

.sl-year {
    height: 25px;
    padding: 4px 0 0 2px;
    line-height: 18px;
    color: #999;
}

.sl-months {
    display: grid;
    grid-template-columns: repeat(10, 32.500px) 11px;
    height: 27px;
    padding-top: 5px;
    line-height: 18px;
    color: #999;
    overflow: hidden;
    margin-right: 2px;
}

.sl-months span {
    padding-left: 2px;
}

.sl-months span:nth-child(10) {
    padding-left: 4px;
}

.sl-bar {
    display: grid;
    grid-template-columns: repeat(10, 32.500px) 10px;
    margin-left: -3px;
    padding-left: 3px;
    height: 17px;
    background: #d9d9d9;
    width: 340px;
}

.sl-bar i {
    border-right: 1px solid #fff;
}

.sl-thumb {
    position: absolute;
    left: 0;
    top: 116px;
    width: 45px;
    height: 17px;
    border-radius: 4px;
    background: linear-gradient(#8a8a8a, #b0b0b0 40%, #6e6e6e);
    padding: 0 6px;
}

.sl-thumb span {
    display: block;
    height: 17px;
    background: linear-gradient(#9db0d4, #5f7fb6 55%, #3f5f9e);
    border: 1px dotted #111;
}

.sl-scroll {
    margin-top: 7px;
    display: flex;
    margin-left: 1px;
    width: 335px;
}

.sb-btn {
    width: 15px;
    height: 16px;
    background: #fff;
    border: 1px solid #b9b9b9;
    display: flex;
    align-items: center;
    justify-content: center;
    flex: none;
}

.sl-track {
    width: 261px;
    height: 16px;
    margin: 0 44px 0 1px;
    border: 1px solid #b9b9b9;
}

.tri-l, .tri-r, .tri-u, .tri-d {
    display: block;
    border: 4px solid transparent;
}

.tri-l { border-right: 5px solid #666; border-left: 0; }
.tri-r { border-left: 5px solid #666; border-right: 0; }
.tri-u { border-bottom: 5px solid #777; border-top: 0; }
.tri-d { border-top: 5px solid #777; border-bottom: 0; }

.hdl {
    position: absolute;
    width: 12px;
    height: 12px;
    border-radius: 50%;
    background: #fff;
    border: 2px solid #8c8c8c;
}

.h1 { left: -7px; top: -7px; }
.h2 { left: 167px; top: -7px; }
.h3 { left: 342px; top: -7px; }
.h4 { left: -7px; top: 76px; }
.h5 { left: 342px; top: 76px; }
.h6 { left: -7px; top: 159px; }
.h7 { left: 167px; top: 159px; }
.h8 { left: 342px; top: 159px; }

/* scrollbars */
.vscroll {
    width: 21px;
    flex: none;
    height: 466px;
    padding: 2px 3px 0;
    display: flex;
    flex-direction: column;
}

.vscroll .sb-btn {
    height: 16px;
}

.v-thumb {
    height: 201px;
    background: #fff;
    border: 1px solid #b9b9b9;
    border-top: 0;
    flex: none;
}

.v-track {
    flex: 0 0 232px;
    background: #d9d9d9;
}

.sheetbar {
    height: 28px;
    flex: none;
    background: var(--band);
    display: flex;
    align-items: flex-start;
}

.sheet-nav {
    width: 100px;
    height: 28px;
    padding: 10px 0 0 26px;
    display: flex;
    gap: 24px;
    flex: none;
}

.pale {
    opacity: .3;
}

.sheet-tab {
    width: 85px;
    height: 24px;
    line-height: 23px;
    text-align: center;
    font-size: 13px;
    color: #444;
    flex: none;
}

.sheet-tab.current {
    width: 73px;
    background: #fff;
    border: 1px solid var(--edge);
    border-top: 0;
    border-bottom: 2px solid var(--green);
    color: var(--green);
    font-family: "Noto Sans", sans-serif;
    letter-spacing: .4px;
}

.sheet-tab:not(.current) {
    width: 88px;
    padding-right: 12px;
    text-align: right;
    font-size: 12.500px;
}

.tab-sep {
    width: 1px;
    height: 20px;
    margin-top: 3px;
    background: var(--edge);
    flex: none;
}

.add-sheet {
    margin: 6px 0 0 33px;
}

.hdots {
    width: 3px;
    height: 12px;
    margin: 8px 0 0 509px;
    background: radial-gradient(circle, #888 1px, transparent 1.200px) center top / 3px 4px repeat-y;
    flex: none;
}

.hscroll {
    display: flex;
    margin: 7px 0 0 13px;
    width: 509px;
}

.h-thumb {
    width: 453px;
    height: 15px;
    background: #fff;
    border: 1px solid #b9b9b9;
    flex: none;
}

.h-track {
    width: 27px;
    height: 15px;
    background: #d9d9d9;
    flex: none;
}

.hscroll .sb-btn {
    width: 15px;
    height: 15px;
}

/* status bar */
.status {
    height: 22px;
    flex: none;
    border-top: 1px solid #c8c8c8;
    display: flex;
    align-items: center;
    background: var(--ribbon);
}

.macro {
    margin-left: 8px;
}

.view-btns {
    display: flex;
    margin-left: 1037px;
    align-self: stretch;
}

.view {
    width: 40px;
    display: flex;
    align-items: center;
    justify-content: center;
}

.view.on {
    background: #c6c6c6;
}

.zoom-minus, .zoom-plus {
    position: relative;
    width: 8px;
    height: 1px;
    background: #444;
    flex: none;
}

.zoom-minus { margin-left: 10px; }
.zoom-plus { margin-left: 4px; }

.zoom-plus::after {
    content: "";
    position: absolute;
    left: 3.500px;
    top: -3.500px;
    width: 1px;
    height: 8px;
    background: #444;
}

.zoom-slider {
    width: 100px;
    height: 1px;
    margin-left: 1px;
    background: #999;
    display: flex;
    justify-content: center;
    align-items: center;
    flex: none;
}

.zoom-slider span {
    width: 5px;
    height: 11px;
    background: #777;
}

.zoom-pct {
    margin-left: 10px;
    color: #444;
    font-family: "Noto Sans", sans-serif;
    font-size: 13px;
}
```
